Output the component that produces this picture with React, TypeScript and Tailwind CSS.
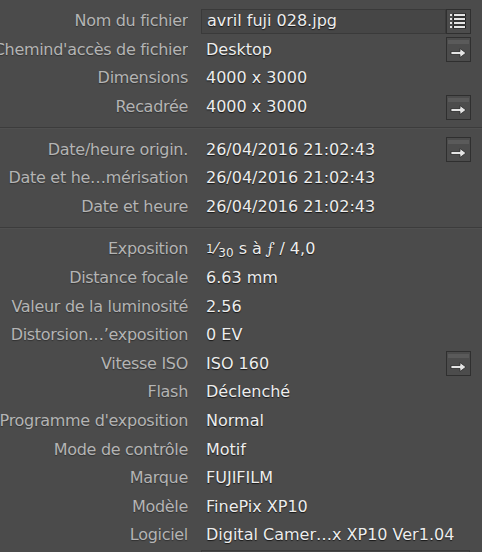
import type { ReactNode } from 'react'

type Row = {
  label: string
  value: ReactNode
  action?: 'arrow' | 'list'
  field?: boolean
}

const sections: Row[][] = [
  [
    { label: 'Nom du fichier', value: 'avril fuji 028.jpg', action: 'list', field: true },
    { label: "Chemind'accès de fichier", value: 'Desktop', action: 'arrow' },
    { label: 'Dimensions', value: '4000 x 3000' },
    { label: 'Recadrée', value: '4000 x 3000', action: 'arrow' },
  ],
  [
    { label: 'Date/heure origin.', value: '26/04/2016 21:02:43', action: 'arrow' },
    { label: 'Date et he…mérisation', value: '26/04/2016 21:02:43' },
    { label: 'Date et heure', value: '26/04/2016 21:02:43' },
  ],
  [
    {
      label: 'Exposition',
      value: (
        <span>
          <sup className="text-[12px] relative -top-[1px]">1</sup>
          <span className="mx-[1px]">⁄</span>
          <sub className="text-[12px]">30</sub> s à <i className="font-serif">ƒ</i> / 4,0
        </span>
      ),
    },
    { label: 'Distance focale', value: '6.63 mm' },
    { label: 'Valeur de la luminosité', value: '2.56' },
    { label: 'Distorsion…’exposition', value: '0 EV' },
    { label: 'Vitesse ISO', value: 'ISO 160', action: 'arrow' },
    { label: 'Flash', value: 'Déclenché' },
    { label: "Programme d'exposition", value: 'Normal' },
    { label: 'Mode de contrôle', value: 'Motif' },
    { label: 'Marque', value: 'FUJIFILM' },
    { label: 'Modèle', value: 'FinePix XP10' },
    { label: 'Logiciel', value: 'Digital Camer…x XP10 Ver1.04' },
  ],
]

function ArrowButton() {
  return (
    <div className="w-[25px] h-[25px] border border-[#2f2f2f] bg-[#4c4c4c] flex flex-col">
      <div className="h-[4px] mt-[2px] mx-[1px] bg-[#5a5a5a]" />
      <div className="flex-1 flex items-center justify-center">
        <svg width="19" height="12" viewBox="0 0 19 12">
          <path d="M2 4.5h9V1.5l6 4.5-6 4.5V7.5H2z" fill="#e4e4e4" stroke="#2a2a2a" strokeWidth="0.8" />
        </svg>
      </div>
    </div>
  )
}

function ListButton() {
  return (
    <div className="w-[25px] h-[25px] border border-[#2f2f2f] bg-[#4c4c4c] flex items-center justify-center">
      <svg width="19" height="17" viewBox="0 0 19 17">
        {[2, 6, 10, 14].map((y) => (
          <g key={y}>
            <rect x="1" y={y - 1} width="2" height="2" fill="#e4e4e4" />
            <rect x="4" y={y - 1.5} width="13" height="3" fill="#1e1e1e" />
            <rect x="5" y={y - 1} width="11" height="2" fill="#e4e4e4" />
          </g>
        ))}
      </svg>
    </div>
  )
}

function MetaRow({ row }: { row: Row }) {
  return (
    <div className="h-[28.6px] flex items-center">
      <div className="w-[188px] shrink-0 flex justify-end overflow-hidden whitespace-nowrap text-[#b4b4b4] tracking-[-0.3px] [text-shadow:0_1px_1px_rgba(0,0,0,0.35)]">
        {row.label}
      </div>
      <div className="flex-1 min-w-0 ml-[13px] mr-[11px] flex items-center">
        <div
          className={`flex-1 min-w-0 h-[25px] flex items-center pl-[5px] whitespace-nowrap text-[#ededed] [text-shadow:0_1px_1px_rgba(0,0,0,0.7)] ${
            row.field ? 'bg-[#464646] border border-[#3a3a3a]' : ''
          }`}
        >
          {row.value}
        </div>
        <div className="w-[25px] shrink-0">
          {row.action === 'arrow' && <ArrowButton />}
          {row.action === 'list' && <ListButton />}
        </div>
      </div>
    </div>
  )
}

export default function App() {
  return (
    <div
      className="w-[482px] h-[552px] overflow-hidden bg-[#4b4b4b] pt-[7px] text-[16px] leading-none"
      style={{ fontFamily: '"DejaVu Sans", "Noto Sans", sans-serif' }}
    >
      {sections.map((rows, i) => (
        <div key={i}>
          {i > 0 && (
            <div className="py-[6px]">
              <div className="h-[1px] bg-[#3c3c3c]" />
              <div className="h-[1px] bg-[#505050]" />
            </div>
          )}
          {rows.map((row) => (
            <MetaRow key={row.label} row={row} />
          ))}
        </div>
      ))}
      <div className="ml-[201px] mr-[12px] h-[25px] bg-[#464646] border border-[#3a3a3a]" />
    </div>
  )
}
